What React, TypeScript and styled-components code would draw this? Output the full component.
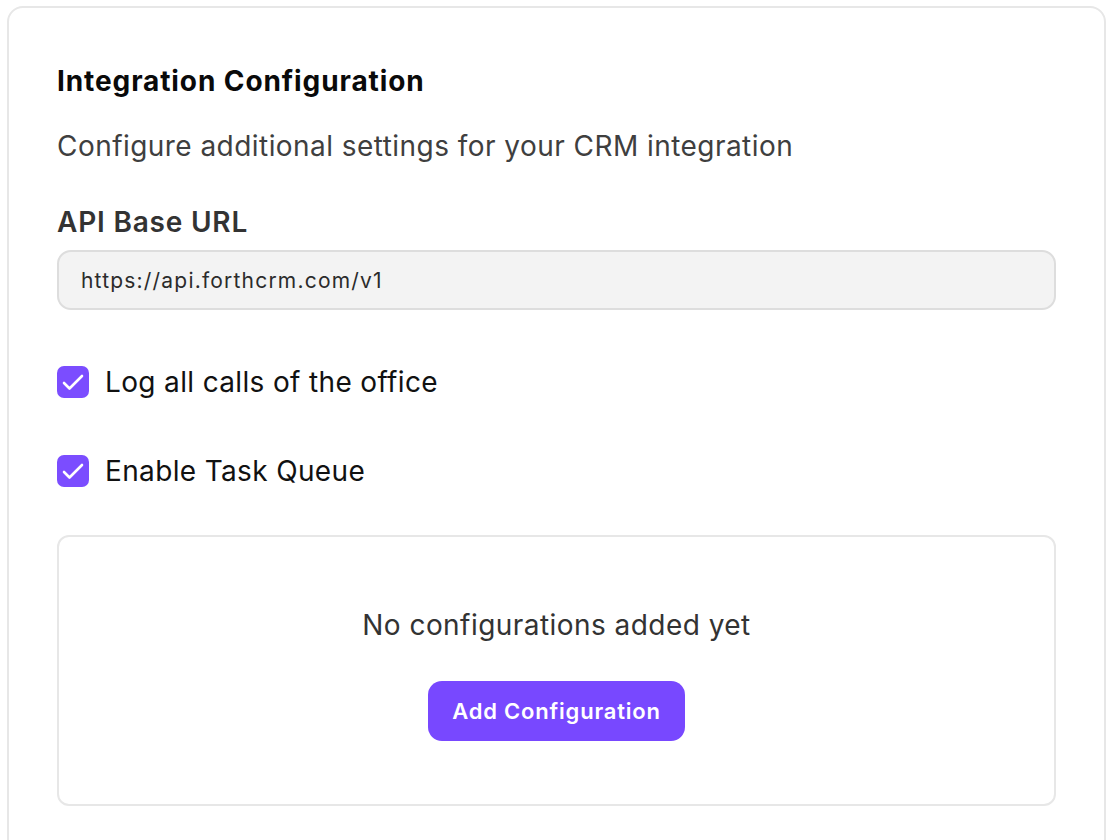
import React from "react";
import styled, { createGlobalStyle } from "styled-components";

const GlobalStyle = createGlobalStyle`
  html, body {
    margin: 0;
    padding: 0;
    background: #ffffff;
    font-family: Inter, "Noto Sans", "Liberation Sans", sans-serif;
    -webkit-font-smoothing: antialiased;
  }
`;

const Card = styled.section`
  box-sizing: border-box;
  width: 1099px;
  margin: 6px 0 0 7px;
  padding: 57px 48px 60px 48px;
  border: 2px solid #e7e7e7;
  border-radius: 16px;
  display: flex;
  flex-direction: column;
`;

const Title = styled.h2`
  margin: 0;
  font-size: 28px;
  line-height: 32px;
  font-weight: 700;
  letter-spacing: 0.9px;
  color: #0a0a0a;
`;

const Subtitle = styled.p`
  margin: 31px 0 0 0;
  font-size: 28px;
  line-height: 36px;
  font-weight: 400;
  letter-spacing: 0.45px;
  color: #3f3f3f;
`;

const FieldLabel = styled.label`
  margin-top: 40px;
  font-size: 28px;
  line-height: 36px;
  font-weight: 600;
  letter-spacing: 0.8px;
  color: #333333;
`;

const TextInput = styled.input`
  box-sizing: border-box;
  margin-top: 10px;
  width: 100%;
  height: 60px;
  padding: 0 22px;
  border: 2px solid #dddddd;
  border-radius: 14px;
  background: #f3f3f3;
  font-family: inherit;
  font-size: 21px;
  letter-spacing: 1.2px;
  color: #2b2b2b;
  outline: none;
`;

const CheckRow = styled.label<{ $gap: number }>`
  display: flex;
  align-items: center;
  gap: 16px;
  height: 36px;
  margin-top: ${(p) => p.$gap}px;
  font-size: 28px;
  letter-spacing: 0.35px;
  color: #111111;
  cursor: pointer;
`;

const CheckBox = styled.span<{ $checked: boolean }>`
  flex: none;
  width: 32px;
  height: 32px;
  border-radius: 7px;
  background: ${(p) => (p.$checked ? "#7b4dff" : "#ffffff")};
  border: ${(p) => (p.$checked ? "none" : "2px solid #cfcfcf")};
  display: flex;
  align-items: center;
  justify-content: center;
`;

const EmptyBox = styled.div`
  box-sizing: border-box;
  margin-top: 46px;
  width: 100%;
  padding: 70px 0 63px 0;
  border: 2px solid #e7e7e7;
  border-radius: 12px;
  display: flex;
  flex-direction: column;
  align-items: center;
`;

const EmptyText = styled.p`
  margin: 0;
  font-size: 28px;
  line-height: 36px;
  letter-spacing: 0.45px;
  color: #333333;
`;

const PrimaryButton = styled.button`
  margin-top: 38px;
  height: 60px;
  padding: 0 24px;
  border: none;
  border-radius: 14px;
  background: #7848ff;
  color: #ffffff;
  font-family: inherit;
  font-size: 22px;
  font-weight: 600;
  letter-spacing: 0.8px;
  cursor: pointer;
`;

function Check({ label, checked, gap }: { label: string; checked: boolean; gap: number }) {
  return (
    <CheckRow $gap={gap}>
      <CheckBox $checked={checked}>
        {checked && (
          <svg width="32" height="32" viewBox="0 0 32 32" fill="none">
            <path
              d="M7 17l5.5 5.5L25 10"
              stroke="#ffffff"
              strokeWidth="2.6"
              strokeLinecap="round"
              strokeLinejoin="round"
            />
          </svg>
        )}
      </CheckBox>
      {label}
    </CheckRow>
  );
}

export default function App() {
  return (
    <>
      <GlobalStyle />
      <Card>
        <Title>Integration Configuration</Title>
        <Subtitle>Configure additional settings for your CRM integration</Subtitle>
        <FieldLabel>API Base URL</FieldLabel>
        <TextInput defaultValue="https://api.forthcrm.com/v1" />
        <Check label="Log all calls of the office" checked gap={54} />
        <Check label="Enable Task Queue" checked gap={53} />
        <EmptyBox>
          <EmptyText>No configurations added yet</EmptyText>
          <PrimaryButton>Add Configuration</PrimaryButton>
        </EmptyBox>
      </Card>
    </>
  );
}
